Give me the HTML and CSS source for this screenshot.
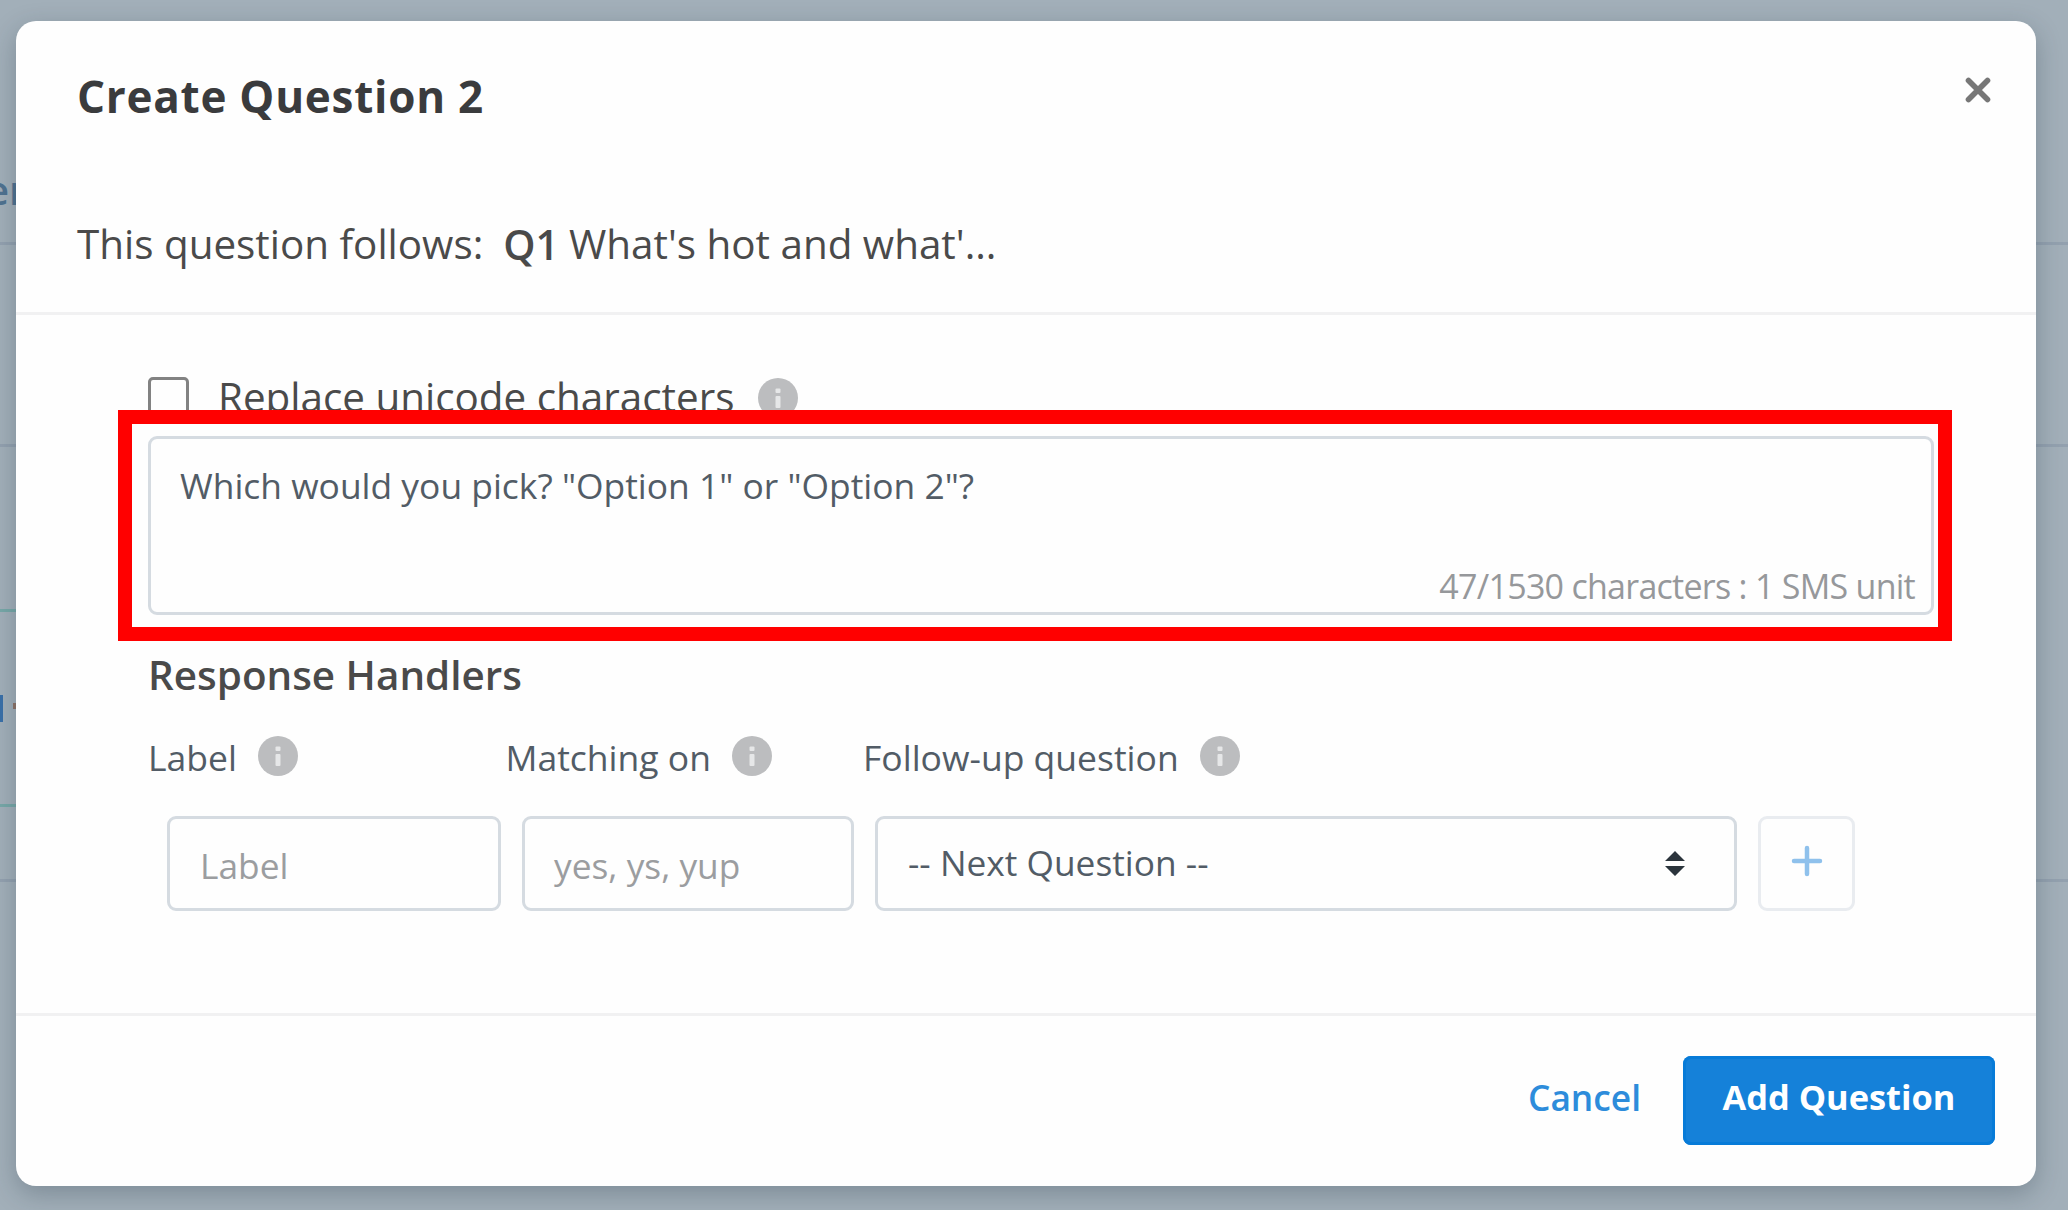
FILE: index.html
```
<!DOCTYPE html>
<html lang="en">
<head>
<meta charset="utf-8">
<title>Create Question 2</title>
<link rel="stylesheet" href="styles.css">
</head>
<body>
<svg width="0" height="0" class="sprite" aria-hidden="true">
  <symbol id="info" viewBox="0 0 40 40">
    <circle cx="20" cy="20" r="20" fill="#bcbdbf"/>
    <rect x="17.5" y="10.5" width="5" height="4.5" rx="1" fill="#e6e7e8"/>
    <rect x="17.5" y="18" width="5" height="12" rx="1" fill="#e6e7e8"/>
  </symbol>
</svg>
<div class="page">
  <div class="page-row page-row-heading"><span class="page-heading">er</span></div>
  <div class="page-row page-row-a"></div>
  <div class="page-row page-row-b"><div class="page-card"><span class="page-mark"></span><span class="page-dot"></span></div></div>
</div>
<main class="dialog">
  <header class="dialog-header">
    <div class="title-row">
      <h1>Create Question 2</h1>
      <svg class="close" viewBox="0 0 26 26"><path d="M3.5 3.5 22.5 22.5M22.5 3.5 3.5 22.5" stroke="#777" stroke-width="5.6" stroke-linecap="round"/></svg>
    </div>
    <div class="follows"><span class="follows-label">This question follows:</span><b>Q1</b><span>What's hot and what'...</span></div>
  </header>
  <section class="dialog-body">
    <div class="check-row">
      <span class="checkbox"></span>
      <span class="check-label">Replace unicode characters</span>
      <svg class="info"><use href="#info"/></svg>
    </div>
    <div class="message">
      <div class="message-text">Which would you pick? "Option 1" or "Option 2"?</div>
      <div class="counter">47/1530 characters : 1 SMS unit</div>
    </div>
    <h2>Response Handlers</h2>
    <div class="heads">
      <div class="head"><span>Label</span><svg class="info"><use href="#info"/></svg></div>
      <div class="head"><span>Matching on</span><svg class="info"><use href="#info"/></svg></div>
      <div class="head"><span>Follow-up question</span><svg class="info"><use href="#info"/></svg></div>
    </div>
    <div class="fields">
      <div class="field placeholder">Label</div>
      <div class="field placeholder placeholder-match">yes, ys, yup</div>
      <div class="field select"><span>-- Next Question --</span>
        <svg class="arrows" viewBox="0 0 20 25"><path d="M10 0 20 10H0ZM0 15H20L10 25Z" fill="#2b343c"/></svg>
      </div>
      <div class="field add"><svg class="plus" viewBox="0 0 32 32"><path d="M16 3V29M3 16H29" stroke="#8fc1ec" stroke-width="4.5" stroke-linecap="round"/></svg></div>
    </div>
  </section>
  <footer class="dialog-footer">
    <span class="cancel">Cancel</span>
    <span class="submit">Add Question</span>
  </footer>
  <div class="highlight"></div>
</main>
</body>
</html>
```
FILE: styles.css
```
* { box-sizing: border-box; }
body {
  margin: 0;
  width: 2068px;
  height: 1210px;
  overflow: hidden;
  position: relative;
  background: #a2afb9;
  font-family: "Open Sans", "Noto Sans", sans-serif;
  color: #4a4a4a;
}
.sprite { position: absolute; }

.page { height: 1210px; display: flex; flex-direction: column; }
.page-row { border-bottom: 3px solid #93a1af; }
.page-row-heading { height: 245px; padding-top: 163px; }
.page-heading {
  display: block;
  margin-left: -14px;
  font-size: 40px;
  font-weight: 600;
  line-height: 54px;
  color: #4f7290;
}
.page-row-a { height: 202px; }
.page-row-b { height: 435px; padding-top: 162px; }
.page-card {
  width: 200px;
  height: 198px;
  padding-top: 83px;
  border: solid #77a8a8;
  border-width: 3px 0;
  display: flex;
  gap: 10px;
}
.page-mark { width: 3px; height: 27px; background: #3a70a8; }
.page-dot { width: 4px; height: 6px; margin-top: 8px; background: #8f7468; }

.dialog {
  position: absolute;
  left: 16px;
  top: 21px;
  width: 2020px;
  height: 1165px;
  border-radius: 20px;
  background: #fefefe;
  box-shadow: 0 8px 26px rgba(30, 45, 60, .28);
}
.dialog-header {
  height: 294px;
  padding: 45px 45px 0 61px;
  border-bottom: 3px solid #f1f1f2;
}
.title-row { display: flex; justify-content: space-between; }
h1 {
  margin: 0;
  font-size: 44px;
  font-weight: 700;
  line-height: 61px;
  letter-spacing: .75px;
  color: #3a3b3d;
}
.close { width: 26px; height: 26px; margin-top: 11px; }
.follows {
  display: flex;
  margin-top: 87px;
  font-size: 40.4px;
  line-height: 60px;
}
.follows b { margin: 0 10px 0 20px; font-weight: 600; font-size: 41px; }

.dialog-body {
  height: 701px;
  padding: 62px 102px 0 132px;
  border-bottom: 3px solid #f1f1f2;
}
.info { width: 40px; height: 40px; flex: none; }
.check-row { display: flex; height: 42px; }
.checkbox {
  width: 41px;
  height: 40px;
  border: 3px solid #828282;
  border-radius: 5px;
}
.check-label {
  margin: 0 24px 0 29px;
  font-size: 40.4px;
  line-height: 39px;
}
.check-row .info { margin-top: 1px; }
.message {
  height: 179px;
  margin-top: 17px;
  padding: 22px 16px 6px 29px;
  border: 3px solid #d5dbe1;
  border-radius: 9px;
  display: flex;
  flex-direction: column;
  justify-content: space-between;
  color: #525c66;
}
.message-text { font-size: 35.4px; line-height: 48px; }
.counter {
  align-self: flex-end;
  font-size: 34px;
  line-height: 40px;
  letter-spacing: -.73px;
  color: #96989b;
}
h2 {
  margin: 35px 0 36px;
  font-size: 40.4px;
  font-weight: 600;
  line-height: 50px;
}
.heads { display: grid; grid-template-columns: 357.5px 357.5px auto; }
.head {
  display: flex;
  gap: 21px;
  font-size: 35.5px;
  line-height: 43px;
  color: #525c66;
}
.fields {
  display: grid;
  grid-template-columns: 334px 332px 862px 97px;
  column-gap: 21px;
  margin: 37px 0 0 19px;
}
.field {
  height: 95px;
  padding-left: 30px;
  border: 3px solid #d5dbe1;
  border-radius: 9px;
  display: flex;
  align-items: center;
  font-size: 35.3px;
  line-height: 48px;
  color: #525c66;
}
.placeholder { padding-top: 2px; color: #9b9da0; }
.placeholder-match { padding-left: 29px; }
.select { justify-content: space-between; padding-right: 49px; }
.select span { margin-bottom: 4px; }
.arrows { width: 20px; height: 25px; }
.add { justify-content: center; padding: 0 0 5px; border-color: #e9ecf0; }
.plus { width: 32px; height: 32px; }

.dialog-footer {
  display: flex;
  justify-content: flex-end;
  gap: 42px;
  padding: 40px 41px 0 0;
  font-size: 35.3px;
  font-weight: 600;
  line-height: 82px;
}
.cancel { color: #2d8cdb; }
.submit {
  width: 312px;
  height: 89px;
  border-radius: 8px;
  background: #1581d9;
  box-shadow: inset 0 0 0 3px #077bd8;
  color: #fff;
  font-size: 34.4px;
  font-weight: 700;
  text-align: center;
}
.highlight {
  position: absolute;
  left: 102px;
  top: 389px;
  width: 1834px;
  height: 231px;
  border: 14px solid #f00;
}
```
